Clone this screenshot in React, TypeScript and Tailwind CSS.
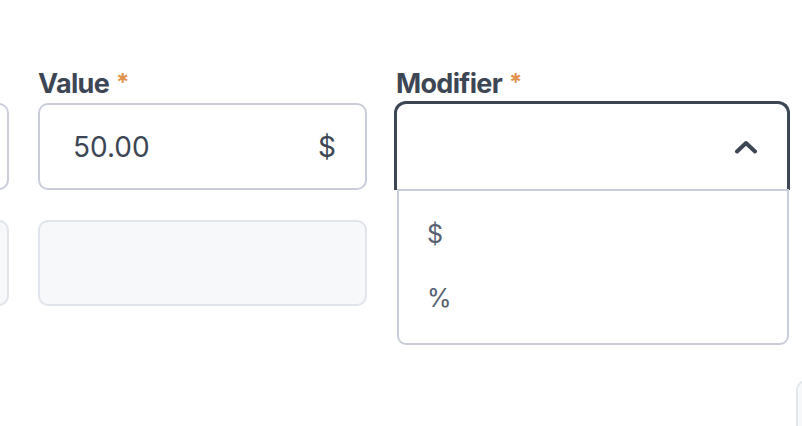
import React from "react";

// ラベル付きフィールド
function Label({ text }: { text: string }) {
    return (
        <div className="h-[33px] flex items-start text-[27px] font-bold tracking-[-0.025em] text-[#3d4654] leading-[28px]">
            {text}
            <span className="ml-[7px] mt-[1px] text-[24px] leading-[24px] text-[#e0914a] font-bold">*</span>
        </div>
    );
}

function ChevronUp() {
    return (
        <svg width="24" height="14" viewBox="0 0 24 14" fill="none">
            <polyline points="3,11.5 12,3 21,11.5" stroke="#3d4654" strokeWidth="4" strokeLinecap="round" strokeLinejoin="round" />
        </svg>
    );
}

export default function App() {
    const options = ["$", "%"];

    return (
        <div className="w-[802px] h-[426px] overflow-hidden bg-white" style={{ fontFamily: "Inter, 'Noto Sans', sans-serif" }}>
            <div className="pt-[70px] ml-[-320px] grid grid-cols-[329px_329px_392px] gap-x-[29px] gap-y-[30px]">
                {/* 1行目 */}
                <div>
                    <div className="h-[33px]" />
                    <div className="h-[87px] rounded-[10px] border-2 border-[#c9cdd9] bg-white" />
                </div>
                <div>
                    <Label text="Value" />
                    <div className="h-[87px] rounded-[10px] border-2 border-[#c9cdd9] bg-white flex items-center justify-between pl-[33px] pr-[29px] text-[28px] text-[#3d4654]">
                        <span>50.00</span>
                        <span>$</span>
                    </div>
                </div>
                <div className="relative">
                    <Label text="Modifier" />
                    <div className="-mt-[2px] -mx-[2px] h-[89px] rounded-t-[12px] border-[3px] border-b-0 border-[#3d4654] bg-white flex items-center justify-end pr-[29px]">
                        <ChevronUp />
                    </div>
                    {/* ドロップダウン */}
                    <div className="absolute left-[1px] right-[-1px] top-[119px] z-10 bg-white border-2 border-[#c9cdd9] rounded-b-[9px] py-[12px]">
                        {options.map((o) => (
                            <div key={o} className="h-[64px] flex items-center pl-[28px] text-[25px] text-[#566070]">
                                {o}
                            </div>
                        ))}
                    </div>
                </div>

                {/* 2行目 */}
                <div className="h-[86px] rounded-[10px] border-2 border-[#e0e4eb] bg-[#f7f8fa]" />
                <div className="h-[86px] rounded-[10px] border-2 border-[#e0e4eb] bg-[#f7f8fa]" />
                <div />
            </div>

            {/* 右下のボタン */}
            <div className="mt-[74px] pl-[796px] flex">
                <div className="shrink-0 w-[120px] h-[60px] rounded-[10px] border-2 border-[#e3e6ec] bg-[#f7f8fa]" />
            </div>
        </div>
    );
}
